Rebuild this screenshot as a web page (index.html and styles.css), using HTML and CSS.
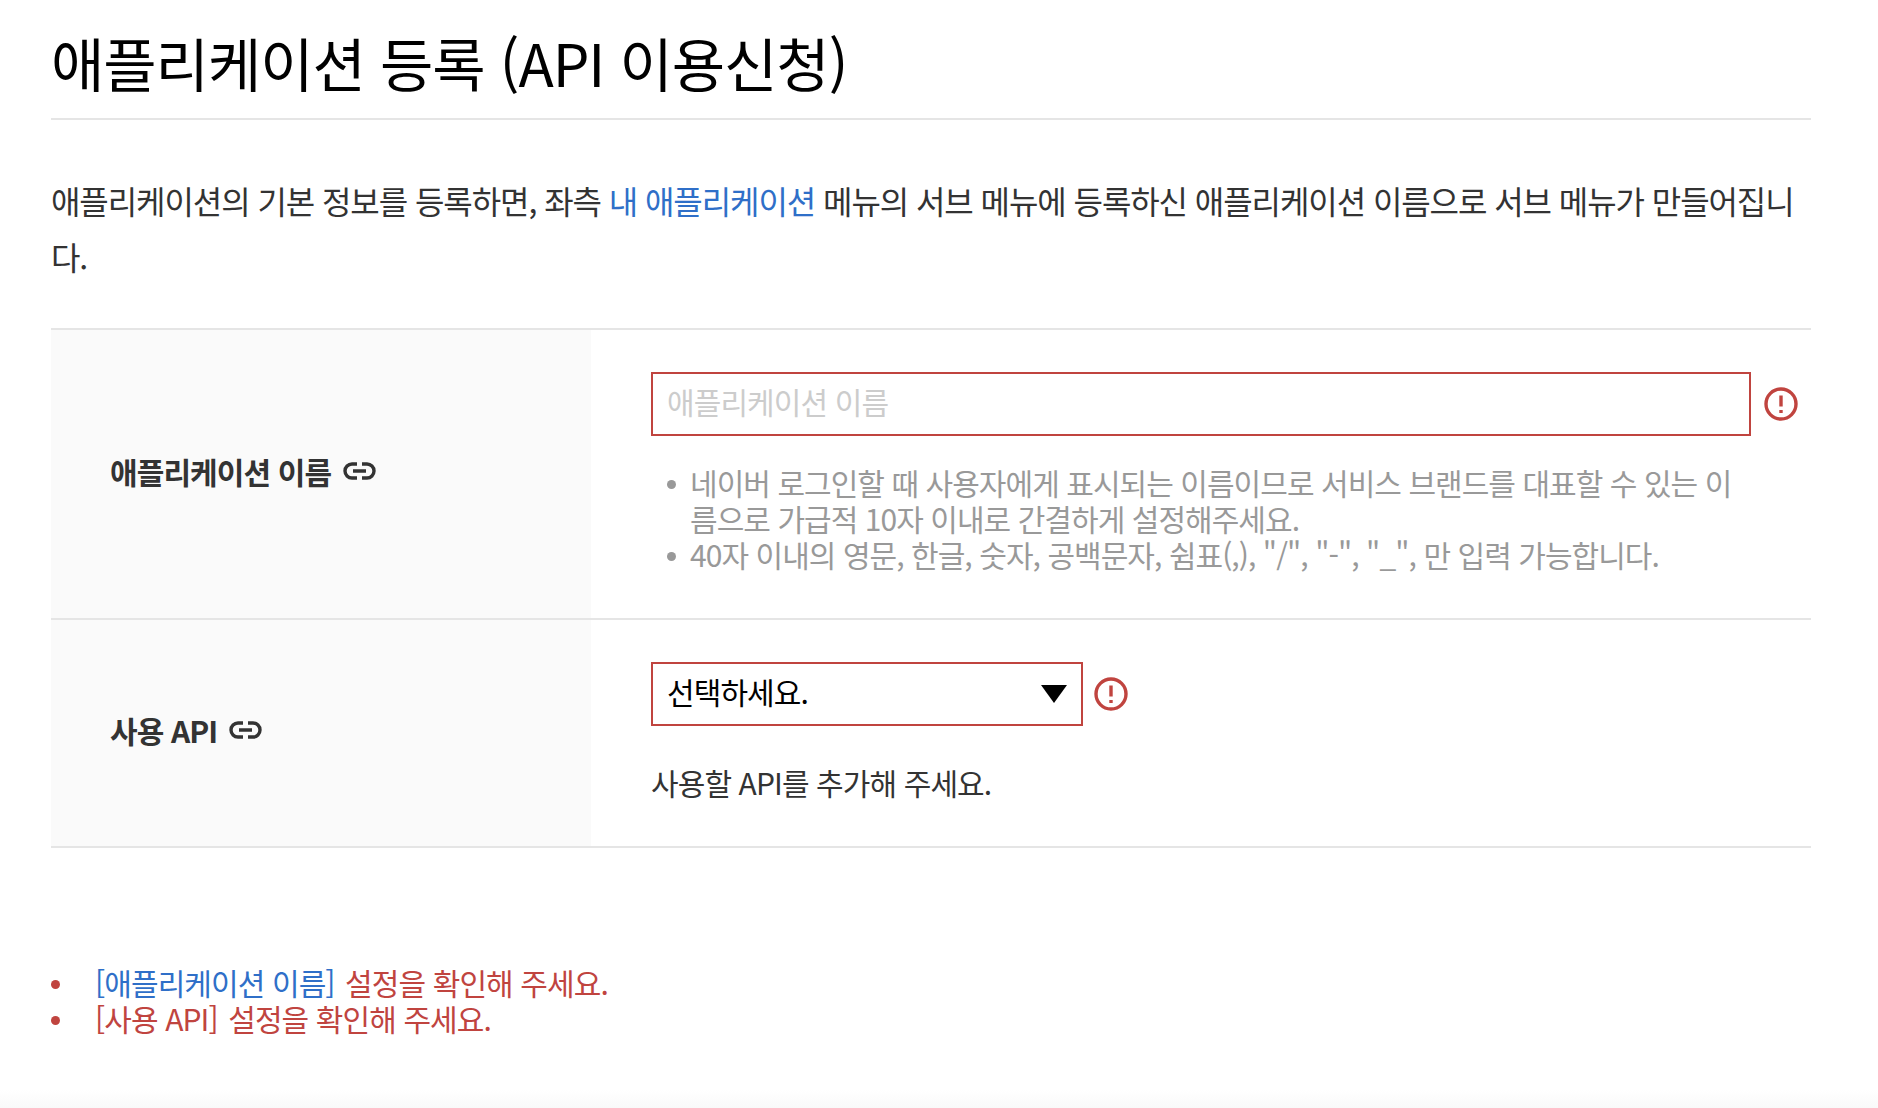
FILE: index.html
```html
<!DOCTYPE html>
<html lang="ko">
<head>
<meta charset="utf-8">
<title>애플리케이션 등록</title>
<link rel="stylesheet" href="styles.css">
</head>
<body>
<main class="page">
  <h1 class="title">애플리케이션 등록 (API 이용신청)</h1>
  <p class="intro">애플리케이션의 기본 정보를 등록하면, 좌측 <a class="link" href="#">내 애플리케이션</a> 메뉴의 서브 메뉴에 등록하신 애플리케이션 이름으로 서브 메뉴가 만들어집니다.</p>
  <div class="form">
    <div class="label">
      <span>애플리케이션 이름</span>
      <svg class="chain" viewBox="0 0 33 18" aria-hidden="true"><path d="M14 2H9a7 7 0 0 0 0 14h5M19 2h5a7 7 0 0 1 0 14h-5M10 9h13"/></svg>
    </div>
    <div class="field field-name">
      <div class="control">
        <input class="input" type="text" placeholder="애플리케이션 이름">
        <svg class="alert" viewBox="0 0 34 34" aria-hidden="true"><circle cx="17" cy="17" r="15"/><path d="M17 8.5v11M17 23v3"/></svg>
      </div>
      <ul class="hints">
        <li><span>네이버 로그인할 때 사용자에게 표시되는 이름이므로 서비스 브랜드를 대표할 수 있는 이름으로 가급적 10자 이내로 간결하게 설정해주세요.</span></li>
        <li><span>40자 이내의 영문, 한글, 숫자, 공백문자, 쉼표(,), "/", "-", "_", 만 입력 가능합니다.</span></li>
      </ul>
    </div>
    <div class="label">
      <span>사용 API</span>
      <svg class="chain" viewBox="0 0 33 18" aria-hidden="true"><path d="M14 2H9a7 7 0 0 0 0 14h5M19 2h5a7 7 0 0 1 0 14h-5M10 9h13"/></svg>
    </div>
    <div class="field field-api">
      <div class="control control-select">
        <div class="select-wrap">
          <select class="select"><option>선택하세요.</option></select>
        </div>
        <svg class="alert" viewBox="0 0 34 34" aria-hidden="true"><circle cx="17" cy="17" r="15"/><path d="M17 8.5v11M17 23v3"/></svg>
      </div>
      <p class="api-note">사용할 API를 추가해 주세요.</p>
    </div>
  </div>
  <ul class="errors">
    <li><span><a class="link error-name" href="#">[애플리케이션 이름]</a> 설정을 확인해 주세요.</span></li>
    <li><span><span class="error-name">[사용 API]</span> 설정을 확인해 주세요.</span></li>
  </ul>
</main>
</body>
</html>
```
FILE: styles.css
```css
* { box-sizing: border-box; }
html, body { margin: 0; padding: 0; }
body {
  height: 1108px;
  overflow: hidden;
  background: linear-gradient(#fff 1090px, #f9f9f9 1108px);
  font-family: "Noto Sans CJK KR", "Noto Sans", sans-serif;
  color: #333;
}
.page { padding: 0 67px 0 51px; }
.title {
  margin: 0;
  height: 120px;
  padding-top: 23px;
  border-bottom: 2px solid #e5e5e5;
  font-size: 58px;
  line-height: 78px;
  font-weight: 400;
  color: #000;
  letter-spacing: -1.05px;
}
.intro {
  margin: 52px 0 44px;
  font-size: 32px;
  line-height: 56px;
  letter-spacing: -1.08px;
  word-break: break-all;
}
.link { color: #2f6fc8; text-decoration: none; }
.form {
  display: grid;
  grid-template-columns: 540px 1fr;
  border-top: 2px solid #e5e5e5;
}
.label {
  display: flex;
  align-items: center;
  gap: 12px;
  padding-left: 59px;
  padding-bottom: 6px;
  background: #fafafa;
  font-size: 30px;
  font-weight: 700;
  letter-spacing: -0.9px;
  border-bottom: 2px solid #e5e5e5;
}
.field {
  padding: 42px 0 0 60px;
  border-bottom: 2px solid #e5e5e5;
}
.field-name { height: 290px; }
.field-api { height: 228px; }
.chain { width: 33px; height: 18px; flex: none; }
.chain path { fill: none; stroke: #333; stroke-width: 3.4; }
.control { display: flex; align-items: center; gap: 13px; }
.control-select { gap: 11px; }
.input, .select {
  height: 64px;
  border: 2px solid #c0443f;
  border-radius: 0;
  background: #fff;
  font-family: inherit;
  font-size: 30px;
  padding: 0 14px 6px;
  letter-spacing: -0.9px;
  outline: none;
}
.input { width: 1100px; }
.input::placeholder { color: #ccc; opacity: 1; }
.select-wrap { position: relative; width: 432px; }
.select-wrap::after {
  content: "";
  position: absolute;
  top: 23px;
  right: 16px;
  border-left: 13px solid transparent;
  border-right: 13px solid transparent;
  border-top: 18px solid #000;
  pointer-events: none;
}
.select { width: 100%; appearance: none; color: #000; }
.alert { width: 34px; height: 34px; flex: none; }
.alert circle { fill: none; stroke: #c0443f; stroke-width: 3.4; }
.alert path { fill: none; stroke: #c0443f; stroke-width: 3.4; }
.hints, .errors {
  list-style: none;
  font-size: 30px;
  line-height: 36px;
  letter-spacing: -0.95px;
}
.hints li, .errors li { display: flex; }
.hints li::before, .errors li::before {
  content: "";
  flex: none;
  width: 9px;
  height: 9px;
  margin-top: 16px;
  border-radius: 50%;
  background: currentColor;
}
.hints {
  margin: 28px 0 0;
  padding: 0 0 0 16px;
  width: 1100px;
  color: #999;
  word-break: break-all;
}
.hints li { gap: 14px; }
.api-note {
  margin: 38px 0 0;
  font-size: 30px;
  line-height: 36px;
  letter-spacing: -0.9px;
}
.errors {
  margin: 116px 0 0;
  padding: 0;
  color: #c0443f;
  letter-spacing: -0.9px;
}
.errors li { gap: 35px; }
.error-name { margin-right: 3px; }
```
